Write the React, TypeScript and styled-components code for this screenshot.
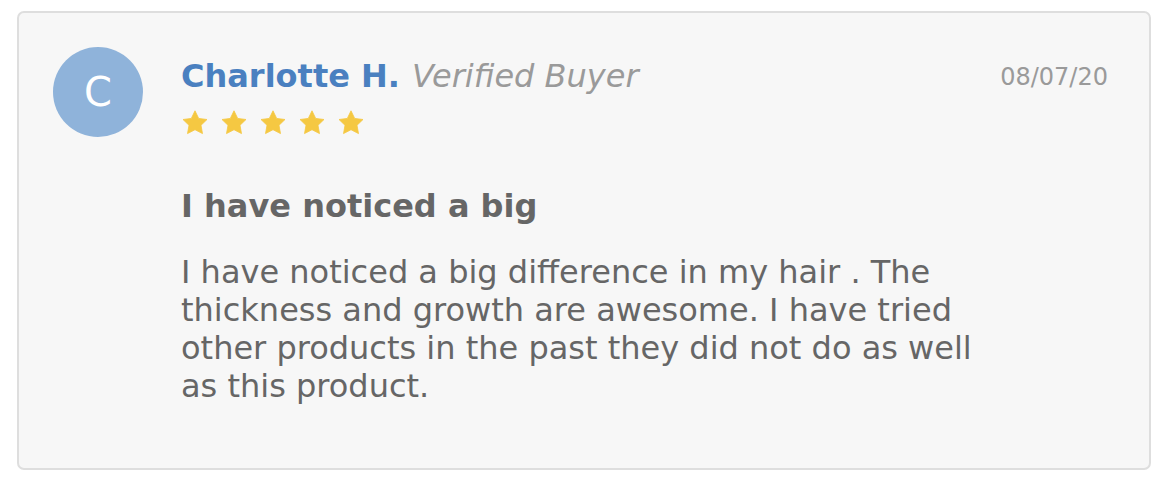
import * as React from 'react'
import styled, { createGlobalStyle } from 'styled-components'

const GlobalStyle = createGlobalStyle`
  body {
    margin: 0;
    background: #ffffff;
    font-family: "DejaVu Sans", Verdana, sans-serif;
  }
`

const Page = styled.div`
  padding: 11px 15px 0 17px;
`

const Card = styled.div`
  display: flex;
  gap: 38px;
  height: 459px;
  box-sizing: border-box;
  padding: 34px 41px 0 34px;
  background: #f7f7f7;
  border: 2px solid #dedede;
  border-radius: 7px;
`

const Avatar = styled.div`
  flex: none;
  display: flex;
  align-items: center;
  justify-content: center;
  width: 90px;
  height: 90px;
  border-radius: 50%;
  background: #8fb3da;
  color: #ffffff;
  font-size: 40px;
`

const Body = styled.div`
  flex: 1;
  display: flex;
  flex-direction: column;
  margin-top: 11px;
`

const HeaderRow = styled.div`
  display: flex;
  justify-content: space-between;
  align-items: flex-start;
  line-height: 37px;
`

const Name = styled.span`
  color: #4a80c0;
  font-weight: bold;
  font-size: 32px;
`

const Badge = styled.span`
  color: #9a9a9a;
  font-style: italic;
  font-size: 32px;
  margin-left: 12px;
`

const DateText = styled.span`
  margin-top: 4px;
  color: #9a9a9a;
  font-size: 24px;
  line-height: 30px;
`

const Stars = styled.div`
  display: flex;
  gap: 13px;
  margin-top: 10px;
  margin-left: 1px;
`

const Title = styled.h3`
  margin: 53px 0 0;
  color: #666666;
  font-size: 32px;
  line-height: 37px;
  font-weight: bold;
`

const Text = styled.p`
  margin: 28px 0 0;
  color: #666666;
  font-size: 32px;
  line-height: 38px;
  max-width: 820px;
`

const Star = () => (
  <svg width="26" height="25" viewBox="0 0 26 25">
    <path
      d="M13 0.8l3.7 7.6 8.3 1.1-6 5.8 1.5 8.3L13 19.7l-7.5 3.9 1.5-8.3-6-5.8 8.3-1.1z"
      fill="#f5c842"
      stroke="#f5c842"
      strokeWidth="0.8"
      strokeLinejoin="round"
    />
  </svg>
)

export default function App() {
  return (
    <Page>
      <GlobalStyle />
      <Card>
        <Avatar>C</Avatar>
        <Body>
          <HeaderRow>
            <div>
              <Name>Charlotte H.</Name>
              <Badge>Verified Buyer</Badge>
            </div>
            <DateText>08/07/20</DateText>
          </HeaderRow>
          <Stars>
            {[0, 1, 2, 3, 4].map((i) => (
              <Star key={i} />
            ))}
          </Stars>
          <Title>I have noticed a big</Title>
          <Text>
            I have noticed a big difference in my hair . The thickness and growth are awesome. I
            have tried other products in the past they did not do as well as this product.
          </Text>
        </Body>
      </Card>
    </Page>
  )
}
